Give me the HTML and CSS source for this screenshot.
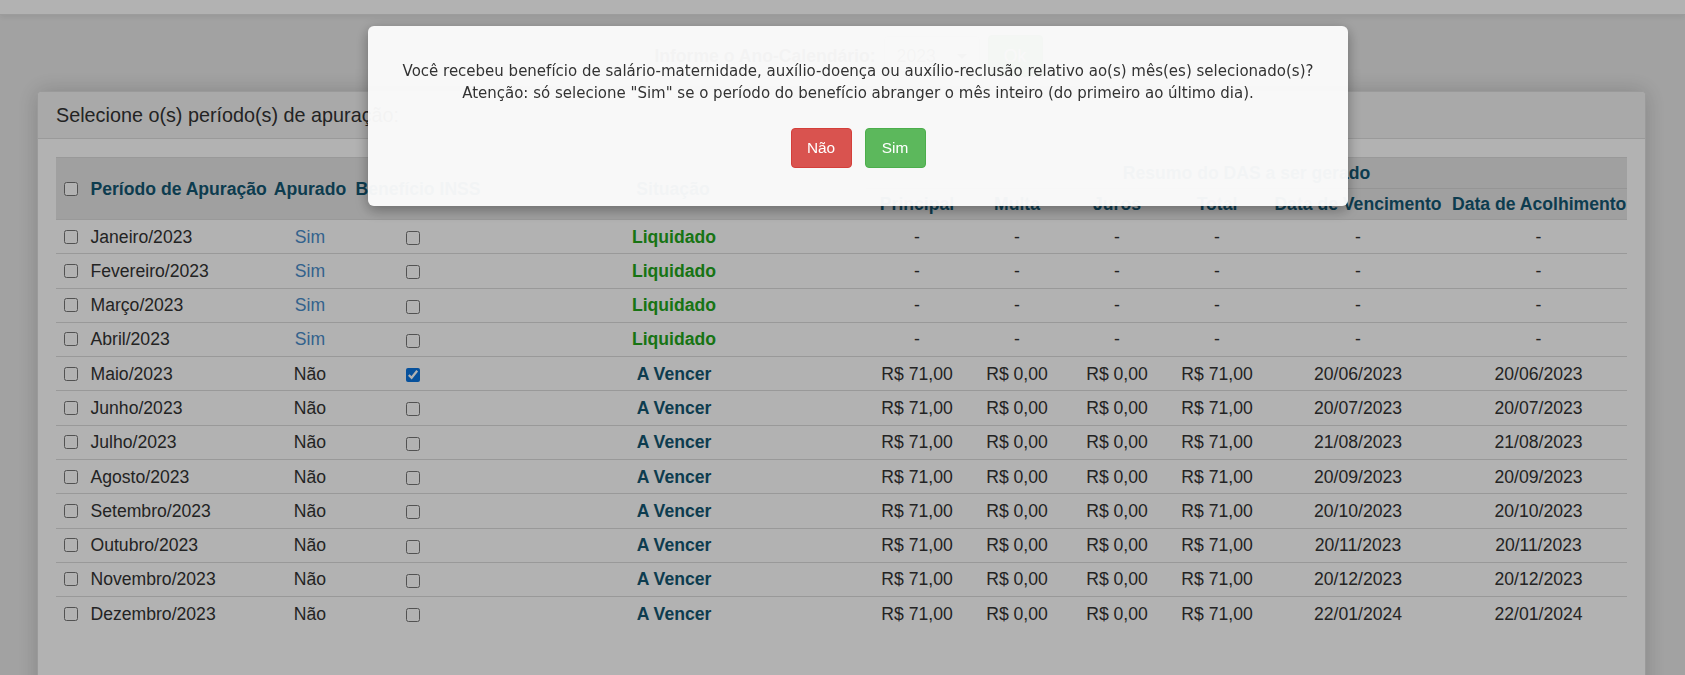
FILE: index.html
```html
<!DOCTYPE html>
<html lang="pt-BR">
<head>
<meta charset="utf-8">
<title>Períodos de apuração</title>
<link rel="stylesheet" href="styles.css">
</head>
<body>
<div class="topbar"></div>

<form class="year-form">
  <label class="year-label" for="ano">Informe o Ano-Calendário:</label>
  <div class="year-select" id="ano"><span>2023</span><span class="caret"></span></div>
  <button type="button" class="btn-ok">Ok</button>
</form>

<section class="panel">
  <div class="panel-heading">Selecione o(s) período(s) de apuração:</div>
  <div class="panel-body">
    <table class="periods">
      <colgroup>
        <col class="c-periodo"><col class="c-apurado"><col class="c-beneficio"><col class="c-situacao">
        <col class="c-valor"><col class="c-valor-s"><col class="c-valor"><col class="c-valor-s">
        <col class="c-venc"><col class="c-acol">
      </colgroup>
      <thead>
        <tr>
          <th rowspan="2" class="left"><label class="chk-label"><input type="checkbox"> Período de Apuração</label></th>
          <th rowspan="2">Apurado</th>
          <th rowspan="2">Benefício INSS</th>
          <th rowspan="2" class="sit">Situação</th>
          <th colspan="6" class="group">Resumo do DAS a ser gerado</th>
        </tr>
        <tr class="sub">
          <th>Principal</th><th>Multa</th><th>Juros</th><th>Total</th><th>Data de Vencimento</th><th>Data de Acolhimento</th>
        </tr>
      </thead>
      <tbody>
        <tr><td class="left"><label class="chk-label"><input type="checkbox"> Janeiro/2023</label></td><td class="link">Sim</td><td class="ben"><input type="checkbox"></td><td class="sit ok">Liquidado</td><td>-</td><td>-</td><td>-</td><td>-</td><td>-</td><td>-</td></tr>
        <tr><td class="left"><label class="chk-label"><input type="checkbox"> Fevereiro/2023</label></td><td class="link">Sim</td><td class="ben"><input type="checkbox"></td><td class="sit ok">Liquidado</td><td>-</td><td>-</td><td>-</td><td>-</td><td>-</td><td>-</td></tr>
        <tr><td class="left"><label class="chk-label"><input type="checkbox"> Março/2023</label></td><td class="link">Sim</td><td class="ben"><input type="checkbox"></td><td class="sit ok">Liquidado</td><td>-</td><td>-</td><td>-</td><td>-</td><td>-</td><td>-</td></tr>
        <tr><td class="left"><label class="chk-label"><input type="checkbox"> Abril/2023</label></td><td class="link">Sim</td><td class="ben"><input type="checkbox"></td><td class="sit ok">Liquidado</td><td>-</td><td>-</td><td>-</td><td>-</td><td>-</td><td>-</td></tr>
        <tr><td class="left"><label class="chk-label"><input type="checkbox"> Maio/2023</label></td><td>Não</td><td class="ben"><input type="checkbox" checked></td><td class="sit due">A Vencer</td><td>R$ 71,00</td><td>R$ 0,00</td><td>R$ 0,00</td><td>R$ 71,00</td><td>20/06/2023</td><td>20/06/2023</td></tr>
        <tr><td class="left"><label class="chk-label"><input type="checkbox"> Junho/2023</label></td><td>Não</td><td class="ben"><input type="checkbox"></td><td class="sit due">A Vencer</td><td>R$ 71,00</td><td>R$ 0,00</td><td>R$ 0,00</td><td>R$ 71,00</td><td>20/07/2023</td><td>20/07/2023</td></tr>
        <tr><td class="left"><label class="chk-label"><input type="checkbox"> Julho/2023</label></td><td>Não</td><td class="ben"><input type="checkbox"></td><td class="sit due">A Vencer</td><td>R$ 71,00</td><td>R$ 0,00</td><td>R$ 0,00</td><td>R$ 71,00</td><td>21/08/2023</td><td>21/08/2023</td></tr>
        <tr><td class="left"><label class="chk-label"><input type="checkbox"> Agosto/2023</label></td><td>Não</td><td class="ben"><input type="checkbox"></td><td class="sit due">A Vencer</td><td>R$ 71,00</td><td>R$ 0,00</td><td>R$ 0,00</td><td>R$ 71,00</td><td>20/09/2023</td><td>20/09/2023</td></tr>
        <tr><td class="left"><label class="chk-label"><input type="checkbox"> Setembro/2023</label></td><td>Não</td><td class="ben"><input type="checkbox"></td><td class="sit due">A Vencer</td><td>R$ 71,00</td><td>R$ 0,00</td><td>R$ 0,00</td><td>R$ 71,00</td><td>20/10/2023</td><td>20/10/2023</td></tr>
        <tr><td class="left"><label class="chk-label"><input type="checkbox"> Outubro/2023</label></td><td>Não</td><td class="ben"><input type="checkbox"></td><td class="sit due">A Vencer</td><td>R$ 71,00</td><td>R$ 0,00</td><td>R$ 0,00</td><td>R$ 71,00</td><td>20/11/2023</td><td>20/11/2023</td></tr>
        <tr><td class="left"><label class="chk-label"><input type="checkbox"> Novembro/2023</label></td><td>Não</td><td class="ben"><input type="checkbox"></td><td class="sit due">A Vencer</td><td>R$ 71,00</td><td>R$ 0,00</td><td>R$ 0,00</td><td>R$ 71,00</td><td>20/12/2023</td><td>20/12/2023</td></tr>
        <tr><td class="left"><label class="chk-label"><input type="checkbox"> Dezembro/2023</label></td><td>Não</td><td class="ben"><input type="checkbox"></td><td class="sit due">A Vencer</td><td>R$ 71,00</td><td>R$ 0,00</td><td>R$ 0,00</td><td>R$ 71,00</td><td>22/01/2024</td><td>22/01/2024</td></tr>
      </tbody>
    </table>
  </div>
</section>

<div class="backdrop"></div>
<div class="dialog" role="dialog">
  <p class="dialog-text">Você recebeu benefício de salário-maternidade, auxílio-doença ou auxílio-reclusão relativo ao(s) mês(es) selecionado(s)?<br>Atenção: só selecione "Sim" se o período do benefício abranger o mês inteiro (do primeiro ao último dia).</p>
  <div class="dialog-actions">
    <button type="button" class="btn btn-no">Não</button>
    <button type="button" class="btn btn-yes">Sim</button>
  </div>
</div>
</body>
</html>
```

FILE: styles.css
```css
html, body {
  margin: 0;
  padding: 0;
}

body {
  background: #e9e9e9;
  font-family: "Liberation Sans", Arial, sans-serif;
  font-size: 17.6px;
  color: #333;
  height: 675px;
  overflow: hidden;
}

/* navigation bar, scrolled mostly out of view */
.topbar {
  height: 14px;
  background: #fff;
  border-bottom: 1px solid #e0e0e0;
  box-shadow: 0 2px 6px rgba(0, 0, 0, .08);
}

/* year chooser */
.year-form {
  display: flex;
  justify-content: center;
  align-items: center;
  gap: 8px;
  height: 42px;
  margin: 20px 0 14px;
  padding-left: 12px;
}

.year-label {
  font-weight: bold;
  color: #333;
}

.year-select {
  display: flex;
  align-items: center;
  justify-content: space-between;
  box-sizing: border-box;
  width: 96px;
  height: 40px;
  padding: 0 12px;
  background: #fff;
  border: 1px solid #ccc;
  border-radius: 4px;
  font-size: 17.6px;
  color: #555;
}

.caret {
  width: 0;
  height: 0;
  border-left: 5px solid transparent;
  border-right: 5px solid transparent;
  border-top: 5px solid #555;
}

.btn-ok {
  width: 55px;
  height: 42px;
  border: 1px solid #4cae4c;
  border-radius: 4px;
  background: #5cb85c;
  color: #fff;
  font: 17.6px "Liberation Sans", Arial, sans-serif;
}

/* panel with the table */
.panel {
  margin: 0 39px 0 37px;
  background: #fff;
  border: 1px solid #ddd;
  border-radius: 4px;
  box-shadow: 0 0 22px rgba(0, 0, 0, .18);
  height: 700px;
}

.panel-heading {
  padding: 11px 18px;
  line-height: 24px;
  font-size: 19.8px;
  color: #333;
  background: #f2f2f2;
  border-bottom: 1px solid #ddd;
  border-radius: 4px 4px 0 0;
}

.panel-body {
  padding: 18px 18px 0;
}

.periods {
  width: 100%;
  table-layout: fixed;
  border-collapse: collapse;
}

.c-periodo { width: 214px; }
.c-apurado { width: 80px; }
.c-beneficio { width: 136px; }
.c-situacao { width: 380px; }
.c-valor { width: 102px; }
.c-valor-s { width: 98px; }
.c-venc { width: 184px; }
.c-acol { width: 177px; }

.periods th {
  background: #e6e6e6;
  color: #135772;
  font-weight: bold;
  line-height: 22px;
  padding: 4px 2px;
  text-align: center;
  white-space: nowrap;
  border-top: 1px solid #ddd;
}

.periods thead tr:first-child th {
  border-top: 1px solid #dcdcdc;
}

.periods th.group {
  border-bottom: 1px solid #d6d6d6;
}

.periods .sub th {
  border-top: 1px solid #d6d6d6;
}

.periods td {
  padding: 5.65px 4px;
  line-height: 22px;
  text-align: center;
  color: #333;
  white-space: nowrap;
  border-top: 1px solid #dcdcdc;
}

.periods th.left,
.periods td.left {
  text-align: left;
  padding-left: 8px;
}

.periods .sit {
  padding-right: 8px;
}

.chk-label {
  display: flex;
  align-items: center;
  gap: 12.5px;
}

input[type="checkbox"] {
  width: 14px;
  height: 14px;
  margin: 0;
  vertical-align: middle;
  accent-color: #0b74e0;
}

.periods td.ben {
  padding-right: 14px;
}

.periods td.link {
  color: #4a8dca;
}

.periods td.ok {
  color: #23a61c;
  font-weight: bold;
}

.periods td.due {
  color: #135772;
  font-weight: bold;
}

/* modal */
.backdrop {
  position: fixed;
  inset: 0;
  background: rgba(0, 0, 0, .3);
}

.dialog {
  position: fixed;
  top: 26px;
  left: 368px;
  width: 980px;
  box-sizing: border-box;
  height: 180px;
  padding: 34px 20px 0;
  background: rgba(251, 251, 251, .965);
  border-radius: 6px;
  box-shadow: 0 4px 14px rgba(0, 0, 0, .35);
  text-align: center;
}

.dialog-text {
  margin: 0;
  font-family: "DejaVu Sans", Verdana, sans-serif;
  font-size: 15px;
  line-height: 22px;
  color: #333;
}

.dialog-actions {
  display: flex;
  justify-content: center;
  gap: 13px;
  margin-top: 24px;
}

.btn {
  width: 61px;
  height: 40px;
  border-radius: 4px;
  color: #fff;
  font: 15.4px "Liberation Sans", Arial, sans-serif;
  cursor: pointer;
}

.btn-no {
  background: #d9534f;
  border: 1px solid #d43f3a;
}

.btn-yes {
  background: #5cb85c;
  border: 1px solid #4cae4c;
}
```
